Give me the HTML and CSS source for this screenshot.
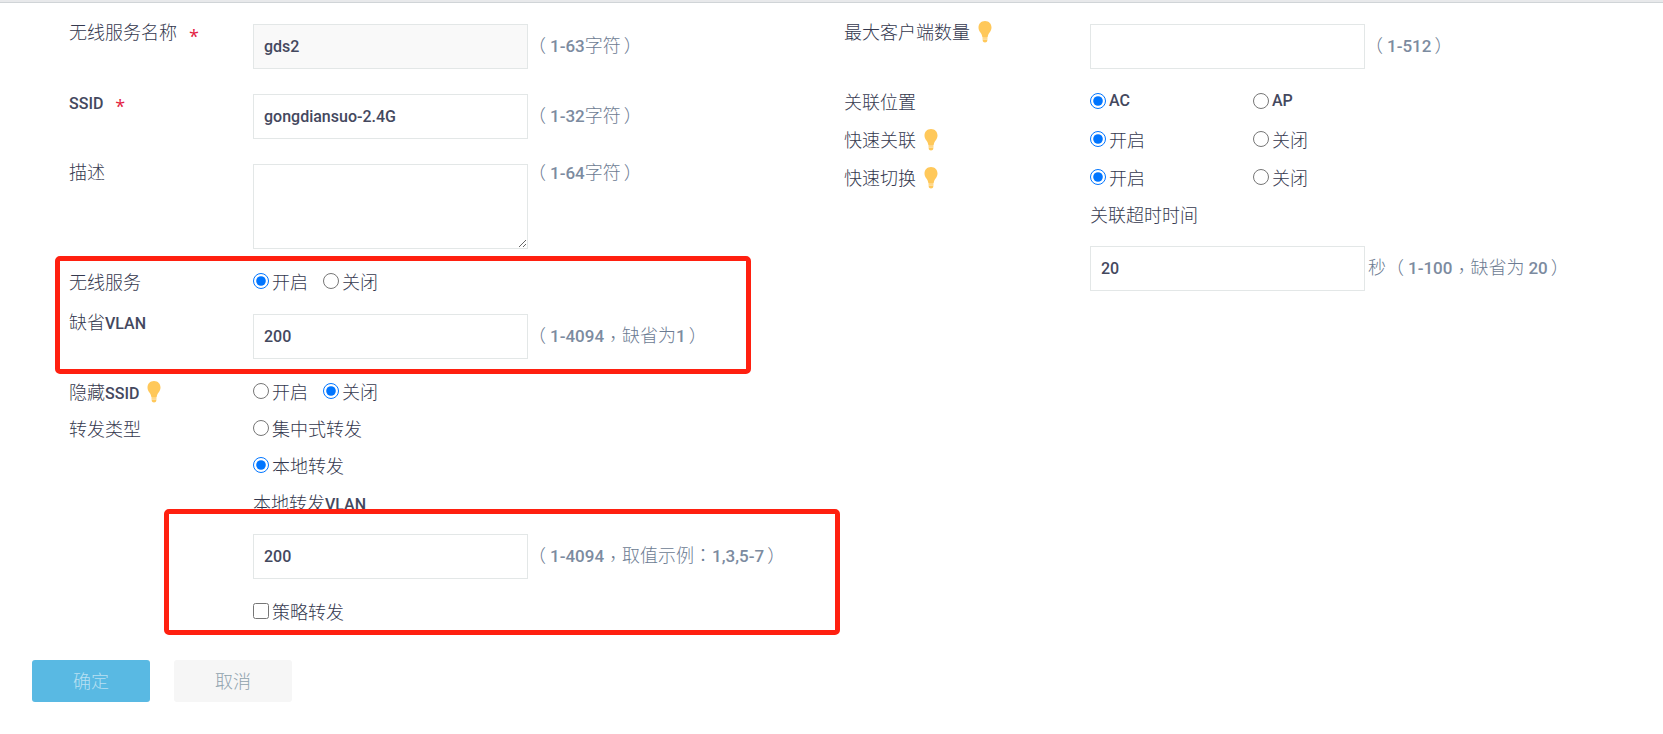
FILE: index.html
```html
<!DOCTYPE html>
<html lang="zh-CN">
<head>
  <meta charset="UTF-8">
  <meta name="viewport" content="width=device-width, initial-scale=1.0">
  <title>无线服务</title>
  <link rel="stylesheet" href="styles.css">
</head>

<body>
  <svg class="sprite" aria-hidden="true">
    <symbol id="bulb" viewBox="0 0 14 22">
      <path fill="#ffc85a" d="M7 0C3 0 .5 2.900 .5 6.500c0 2.200.9 3.500 1.900 5C3.500 13.100 4 14 4.200 15.500c.1.900.5 1.300 1.200 1.300h3.200c.7 0 1.100-.4 1.200-1.300.2-1.500.7-2.400 1.800-4 1-1.500 1.900-2.800 1.900-5C13.500 2.900 11 0 7 0z"/>
      <path fill="#ffd88a" d="M4.500 16.800h5v1.900h-5z"/>
      <path fill="#ffc85a" d="M4.700 18.700h4.600v.8c0 1.200-1 2-2.300 2s-2.300-.8-2.300-2z"/>
    </symbol>
  </svg>

  <div class="topbar"></div>

  <form>
    <div class="columns">
      <div class="column">
        <div class="row">
          <label class="name" for="service_name">无线服务名称 <span class="required">*</span></label>
          <div class="field">
            <input class="text" type="text" id="service_name" value="gds2" readonly>
            <span class="hint"><span class="open">（</span><span class="en">1-63</span>字符<span class="close">）</span></span>
          </div>
        </div>

        <div class="row">
          <label class="name" for="ssid"><span class="en">SSID</span> <span class="required">*</span></label>
          <div class="field">
            <input class="text" type="text" id="ssid" value="gongdiansuo-2.4G">
            <span class="hint"><span class="open">（</span><span class="en">1-32</span>字符<span class="close">）</span></span>
          </div>
        </div>

        <div class="row">
          <label class="name" for="description">描述</label>
          <div class="field field-area">
            <textarea class="text" id="description"></textarea>
            <span class="hint"><span class="open">（</span><span class="en">1-64</span>字符<span class="close">）</span></span>
          </div>
        </div>

        <div class="marked marked-service">
          <div class="row row-service">
            <span class="name">无线服务</span>
            <div class="options">
              <label class="option"><input type="radio" name="service" checked>开启</label>
              <label class="option"><input type="radio" name="service">关闭</label>
            </div>
          </div>

          <div class="row">
            <label class="name" for="vlan">缺省<span class="en">VLAN</span></label>
            <div class="field">
              <input class="text" type="text" id="vlan" value="200">
              <span class="hint"><span class="open">（</span><span class="en">1-4094</span><span class="mark comma" lang="zh-TW">，</span>缺省为<span class="en">1</span><span class="close">）</span></span>
            </div>
          </div>
        </div>

        <div class="row row-radio">
          <span class="name">隐藏<span class="en">SSID</span> <svg class="bulb"><use href="#bulb"/></svg></span>
          <div class="options">
            <label class="option"><input type="radio" name="hide_ssid">开启</label>
            <label class="option"><input type="radio" name="hide_ssid" checked>关闭</label>
          </div>
        </div>

        <div class="row row-radio">
          <span class="name">转发类型</span>
          <div class="stack">
            <label class="option"><input type="radio" name="forward">集中式转发</label>
            <label class="option"><input type="radio" name="forward" checked>本地转发</label>
            <label for="local_vlan">本地转发<span class="en">VLAN</span></label>
            <div class="nested marked marked-vlan">
              <div class="field">
                <input class="text" type="text" id="local_vlan" value="200">
                <span class="hint"><span class="open">（</span><span class="en">1-4094</span><span class="mark comma" lang="zh-TW">，</span>取值示例<span class="mark" lang="zh-TW">：</span><span class="en">1,3,5-7</span><span class="close">）</span></span>
              </div>
              <label class="option"><input type="checkbox" name="policy">策略转发</label>
            </div>
          </div>
        </div>
      </div>

      <div class="column column-wide">
        <div class="row">
          <label class="name" for="max_clients">最大客户端数量 <svg class="bulb"><use href="#bulb"/></svg></label>
          <div class="field">
            <input class="text" type="text" id="max_clients">
            <span class="hint"><span class="open">（</span><span class="en">1-512</span><span class="close">）</span></span>
          </div>
        </div>

        <div class="row row-radio">
          <span class="name">关联位置</span>
          <div class="options">
            <label class="option"><input type="radio" name="location" checked><span class="en">AC</span></label>
            <label class="option"><input type="radio" name="location"><span class="en">AP</span></label>
          </div>
        </div>

        <div class="row row-radio">
          <span class="name">快速关联 <svg class="bulb"><use href="#bulb"/></svg></span>
          <div class="options">
            <label class="option"><input type="radio" name="fast_assoc" checked>开启</label>
            <label class="option"><input type="radio" name="fast_assoc">关闭</label>
          </div>
        </div>

        <div class="row row-radio">
          <span class="name">快速切换 <svg class="bulb"><use href="#bulb"/></svg></span>
          <div class="stack">
            <div class="options">
              <label class="option"><input type="radio" name="fast_switch" checked>开启</label>
              <label class="option"><input type="radio" name="fast_switch">关闭</label>
            </div>
            <label for="timeout">关联超时时间</label>
            <div class="nested">
              <div class="field">
                <input class="text" type="text" id="timeout" value="20">
                <span class="hint hint-unit">秒<span class="open">（</span><span class="en">1-100</span><span class="mark comma" lang="zh-TW">，</span>缺省为 <span class="en">20</span><span class="close">）</span></span>
              </div>
            </div>
          </div>
        </div>
      </div>
    </div>

    <div class="buttons">
      <button class="btn btn-primary" type="submit">确定</button>
      <button class="btn" type="button">取消</button>
    </div>
  </form>
</body>
</html>
```
FILE: styles.css
```css
body {
  margin: 0;
  background: #fff;
  color: #34384e;
  font-family: "Noto Sans CJK SC", sans-serif;
  font-size: 18px;
  font-weight: 300;
  line-height: 24px;
}

.sprite {
  display: none;
}

.topbar {
  height: 2px;
  background: #e8e9eb;
  border-bottom: 1px solid #d0d4d7;
}

.columns {
  display: grid;
  grid-template-columns: 1fr 1fr;
  padding: 16px 44px 0 69px;
}

.row {
  display: flex;
  align-items: flex-start;
  margin-bottom: 20px;
}

.row-radio {
  margin-bottom: 13px;
}

.column-wide .row-radio {
  margin-bottom: 14px;
}

.row-service {
  margin-bottom: 16px;
}

.name {
  flex: none;
  width: 184px;
  height: 24px;
}

.column-wide .name {
  width: 246px;
}

.en {
  color: #44485e;
  font-family: Roboto, sans-serif;
  font-size: 16px;
  font-weight: 500;
  line-height: 1;
}

.required {
  margin-left: 8px;
  color: #e3203f;
  font-family: "Open Sans", sans-serif;
  font-weight: 400;
  vertical-align: -4px;
  line-height: 1;
}

.bulb {
  width: 14px;
  height: 22px;
  margin: -4px 0 0 4px;
  vertical-align: -4px;
}

.field {
  display: flex;
  align-items: center;
}

.field-area {
  align-items: flex-start;
}

.text {
  box-sizing: border-box;
  width: 275px;
  height: 45px;
  margin: 5px 0 0;
  padding: 0 10px;
  border: 1px solid #e3e7e7;
  border-radius: 0;
  background: #fff;
  color: #44485e;
  font-family: Roboto, sans-serif;
  font-size: 16px;
  font-weight: 500;
}

.text[readonly] {
  background: #f9f9f9;
}

textarea.text {
  height: 85px;
}

.hint {
  color: #6c7b92;
  white-space: nowrap;
}

.hint .en {
  color: #7c8ba0;
  font-size: 17px;
}

.hint-unit {
  margin-left: 3px;
}

.open {
  margin-right: 4px;
}

.close {
  margin-left: 3px;
}

.mark {
  font-family: "Noto Sans CJK TC", sans-serif;
  line-height: 1;
}

.comma {
  vertical-align: -4px;
}

.options {
  display: flex;
  gap: 15px;
}

.column-wide .options {
  display: grid;
  grid-template-columns: 163px auto;
  gap: 0;
}

.option {
  display: flex;
  align-items: center;
  gap: 3px;
  height: 24px;
}

.option input {
  width: 16px;
  height: 16px;
  margin: 0;
}

.stack {
  display: flex;
  flex: 1;
  flex-direction: column;
  gap: 13px;
}

.stack > label {
  height: 24px;
}

.nested {
  display: flex;
  flex-direction: column;
  gap: 20px;
  margin-top: 2px;
}

/* red frames drawn over the settings to check */
.marked {
  position: relative;
}

.marked::after {
  content: "";
  position: absolute;
  border: 5px solid #ff2010;
  border-radius: 5px;
  pointer-events: none;
}

.marked-service::after {
  top: -13px;
  right: 93px;
  bottom: -15px;
  left: -14px;
}

.marked-vlan::after {
  top: -20px;
  right: 4px;
  bottom: -12px;
  left: -89px;
}

.buttons {
  display: flex;
  gap: 24px;
  padding: 24px 32px;
}

.btn {
  width: 118px;
  height: 42px;
  padding: 0 0 3px;
  border: none;
  border-radius: 3px;
  background: #f6f6f6;
  color: #8fa2ad;
  font: inherit;
  cursor: pointer;
}

.btn-primary {
  background: #59b9e3;
  color: #b8e0f2;
}
```
